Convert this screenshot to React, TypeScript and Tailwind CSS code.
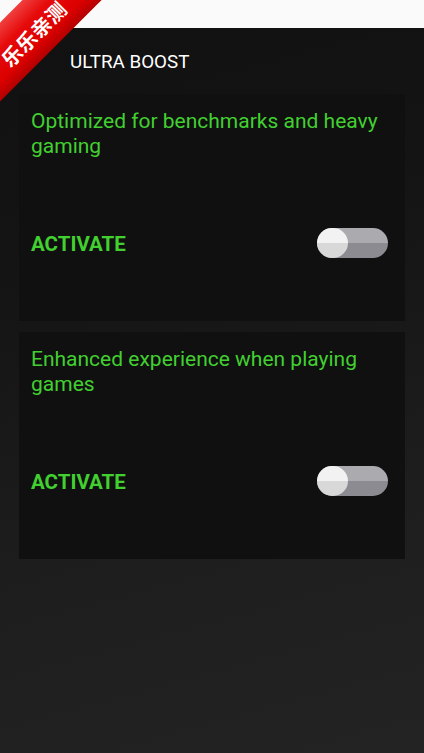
const MODES = [
  { id: 'ultra', text: 'Optimized for benchmarks and heavy gaming' },
  { id: 'game', text: 'Enhanced experience when playing games' },
];

function Toggle() {
  return (
    <div className="relative w-[71px] h-[30px] rounded-full bg-[linear-gradient(to_bottom,#abaaaf_50%,#8c8b91_50%)]">
      <div className="absolute left-0 top-0 w-[31px] h-[30px] rounded-full bg-[linear-gradient(to_bottom,#f2f2f2_50%,#d8d8d8_50%)]" />
    </div>
  );
}

function ModeCard({ text }: { text: string }) {
  return (
    <div className="bg-[#101010] pt-[15px] pl-[12px] pr-[17px] pb-[63px]">
      <p className="text-[21px] leading-[25px] text-[#42cf30] m-0">{text}</p>
      <div className="mt-[69px] h-[30px] flex items-center justify-between">
        <span className="mt-[3px] text-[20.5px] font-bold text-[#42cf30]">ACTIVATE</span>
        <Toggle />
      </div>
    </div>
  );
}

export default function App() {
  return (
    <div className="relative w-[424px] h-[753px] overflow-hidden flex flex-col font-['Roboto',sans-serif]">
      <div className="h-[28px] bg-[#fafafa] shrink-0" />
      <div className="flex-1 bg-[linear-gradient(165deg,#111111_0%,#141414_30%,#1e1e1e_70%,#232323_100%)]">
        <div className="h-[66px] flex items-center">
          <svg className="ml-[16px]" width="24" height="24" viewBox="0 0 24 24" fill="none" stroke="#ffffff" strokeWidth="2">
            <path d="M20 12H5M11 6l-6 6 6 6" />
          </svg>
          <span className="ml-[30px] mt-[2px] text-[18.8px] text-white">ULTRA BOOST</span>
        </div>
        <div className="px-[19px] flex flex-col gap-[11px]">
          {MODES.map(m => (
            <ModeCard key={m.id} text={m.text} />
          ))}
        </div>
      </div>

      <div className="absolute left-[-69px] top-[3px] w-[200px] h-[56px] -rotate-45 flex items-center justify-center pt-[7px] pointer-events-none bg-[linear-gradient(to_bottom,#f04040_0%,#e60a0a_35%,#dd0000_75%,#b30000_100%)]">
        <span className="text-white font-bold text-[20px] leading-none tracking-[0.5px] font-['Noto_Sans_CJK_SC',sans-serif]">乐乐亲测</span>
      </div>
    </div>
  );
}
